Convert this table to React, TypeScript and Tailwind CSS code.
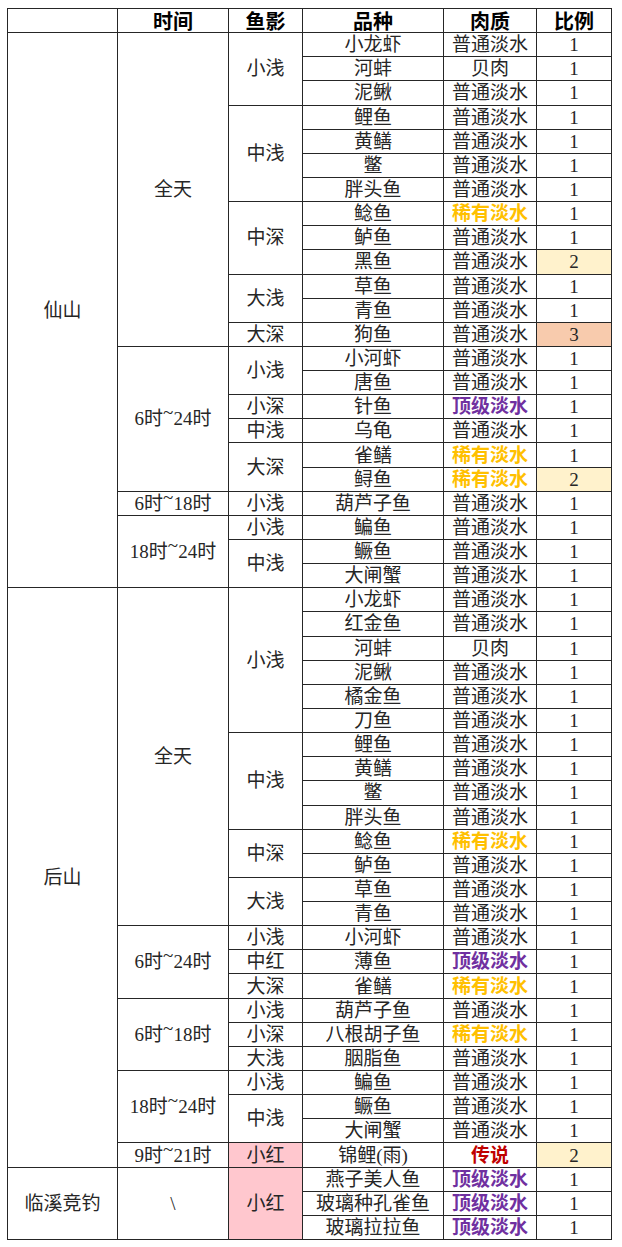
import React from "react";

type Fish = [string, string, number];
type Group = { shadow: string; red?: boolean; fish: Fish[] };
type Slot = { time: string; groups: Group[] };
type Region = { name: string; times: Slot[] };

const N = "普通淡水";
const R = "稀有淡水";
const T = "顶级淡水";

const regions: Region[] = [
  {
    name: "仙山",
    times: [
      {
        time: "全天",
        groups: [
          { shadow: "小浅", fish: [["小龙虾", N, 1], ["河蚌", "贝肉", 1], ["泥鳅", N, 1]] },
          { shadow: "中浅", fish: [["鲤鱼", N, 1], ["黄鳝", N, 1], ["鳖", N, 1], ["胖头鱼", N, 1]] },
          { shadow: "中深", fish: [["鲶鱼", R, 1], ["鲈鱼", N, 1], ["黑鱼", N, 2]] },
          { shadow: "大浅", fish: [["草鱼", N, 1], ["青鱼", N, 1]] },
          { shadow: "大深", fish: [["狗鱼", N, 3]] },
        ],
      },
      {
        time: "6时~24时",
        groups: [
          { shadow: "小浅", fish: [["小河虾", N, 1], ["唐鱼", N, 1]] },
          { shadow: "小深", fish: [["针鱼", T, 1]] },
          { shadow: "中浅", fish: [["乌龟", N, 1]] },
          { shadow: "大深", fish: [["雀鳝", R, 1], ["鲟鱼", R, 2]] },
        ],
      },
      { time: "6时~18时", groups: [{ shadow: "小浅", fish: [["葫芦子鱼", N, 1]] }] },
      {
        time: "18时~24时",
        groups: [
          { shadow: "小浅", fish: [["鳊鱼", N, 1]] },
          { shadow: "中浅", fish: [["鳜鱼", N, 1], ["大闸蟹", N, 1]] },
        ],
      },
    ],
  },
  {
    name: "后山",
    times: [
      {
        time: "全天",
        groups: [
          {
            shadow: "小浅",
            fish: [
              ["小龙虾", N, 1],
              ["红金鱼", N, 1],
              ["河蚌", "贝肉", 1],
              ["泥鳅", N, 1],
              ["橘金鱼", N, 1],
              ["刀鱼", N, 1],
            ],
          },
          { shadow: "中浅", fish: [["鲤鱼", N, 1], ["黄鳝", N, 1], ["鳖", N, 1], ["胖头鱼", N, 1]] },
          { shadow: "中深", fish: [["鲶鱼", R, 1], ["鲈鱼", N, 1]] },
          { shadow: "大浅", fish: [["草鱼", N, 1], ["青鱼", N, 1]] },
        ],
      },
      {
        time: "6时~24时",
        groups: [
          { shadow: "小浅", fish: [["小河虾", N, 1]] },
          { shadow: "中红", fish: [["薄鱼", T, 1]] },
          { shadow: "大深", fish: [["雀鳝", R, 1]] },
        ],
      },
      {
        time: "6时~18时",
        groups: [
          { shadow: "小浅", fish: [["葫芦子鱼", N, 1]] },
          { shadow: "小深", fish: [["八根胡子鱼", R, 1]] },
          { shadow: "大浅", fish: [["胭脂鱼", N, 1]] },
        ],
      },
      {
        time: "18时~24时",
        groups: [
          { shadow: "小浅", fish: [["鳊鱼", N, 1]] },
          { shadow: "中浅", fish: [["鳜鱼", N, 1], ["大闸蟹", N, 1]] },
        ],
      },
      { time: "9时~21时", groups: [{ shadow: "小红", red: true, fish: [["锦鲤(雨)", "传说", 2]] }] },
    ],
  },
  {
    name: "临溪竞钓",
    times: [
      {
        time: "\\",
        groups: [
          {
            shadow: "小红",
            red: true,
            fish: [
              ["燕子美人鱼", T, 1],
              ["玻璃种孔雀鱼", T, 1],
              ["玻璃拉拉鱼", T, 1],
            ],
          },
        ],
      },
    ],
  },
];

const SPAN: Record<number, string> = {
  1: "row-span-1",
  2: "row-span-2",
  3: "row-span-3",
  4: "row-span-4",
  6: "row-span-6",
  13: "row-span-[13]",
  14: "row-span-[14]",
  23: "row-span-[23]",
  24: "row-span-[24]",
};

const meatColor: Record<string, string> = {
  [R]: "text-[#ffc000] font-bold",
  [T]: "text-[#7030a0] font-bold",
  传说: "text-[#c00000] font-bold",
};

const ratioBg: Record<number, string> = {
  1: "bg-white",
  2: "bg-[#fff2cc]",
  3: "bg-[#f8cbad]",
};

const cell = "flex items-center justify-center leading-none";

function TimeText({ text }: { text: string }) {
  const i = text.indexOf("~");
  if (i < 0) return <>{text}</>;
  return (
    <>
      {text.slice(0, i)}
      <span className="relative -top-[6px]">~</span>
      {text.slice(i + 1)}
    </>
  );
}

export default function App() {
  const cells: React.ReactNode[] = [];
  let k = 0;
  regions.forEach((reg) => {
    const regRows = reg.times.reduce(
      (a, t) => a + t.groups.reduce((b, g) => b + g.fish.length, 0),
      0
    );
    cells.push(
      <div key={k++} className={`${cell} bg-white col-start-1 ${SPAN[regRows]}`}>
        {reg.name}
      </div>
    );
    reg.times.forEach((t) => {
      const tRows = t.groups.reduce((b, g) => b + g.fish.length, 0);
      cells.push(
        <div key={k++} className={`${cell} bg-white col-start-2 ${SPAN[tRows]}`}>
          <TimeText text={t.time} />
        </div>
      );
      t.groups.forEach((g) => {
        cells.push(
          <div
            key={k++}
            className={`${cell} col-start-3 ${SPAN[g.fish.length]} ${g.red ? "bg-[#ffc7ce]" : "bg-white"}`}
          >
            {g.shadow}
          </div>
        );
        g.fish.forEach(([name, meat, ratio]) => {
          cells.push(
            <div key={k++} className={`${cell} bg-white col-start-4`}>
              {name}
            </div>
          );
          cells.push(
            <div key={k++} className={`${cell} bg-white col-start-5 ${meatColor[meat] ?? ""}`}>
              {meat}
            </div>
          );
          cells.push(
            <div key={k++} className={`${cell} col-start-6 ${ratioBg[ratio]}`}>
              {ratio}
            </div>
          );
        });
      });
    });
  });

  return (
    <div className="min-h-screen bg-white pt-[8px] pl-[7px]">
      <div
        className="grid h-[1232px] w-fit grid-cols-[109px_110px_73px_140px_92px_74px] grid-rows-[repeat(51,minmax(0,1fr))] gap-px bg-[#262626] p-px text-[19px] text-[#262626]"
        style={{ fontFamily: '"Liberation Serif", "Noto Sans CJK SC", serif' }}
      >
        <div className={`${cell} bg-white`}></div>
        {["时间", "鱼影", "品种", "肉质", "比例"].map((h) => (
          <div
            key={h}
            className={`${cell} bg-white text-[20px] font-bold text-black`}
            style={{ fontFamily: '"Noto Sans CJK SC", sans-serif' }}
          >
            {h}
          </div>
        ))}
        {cells}
      </div>
    </div>
  );
}
